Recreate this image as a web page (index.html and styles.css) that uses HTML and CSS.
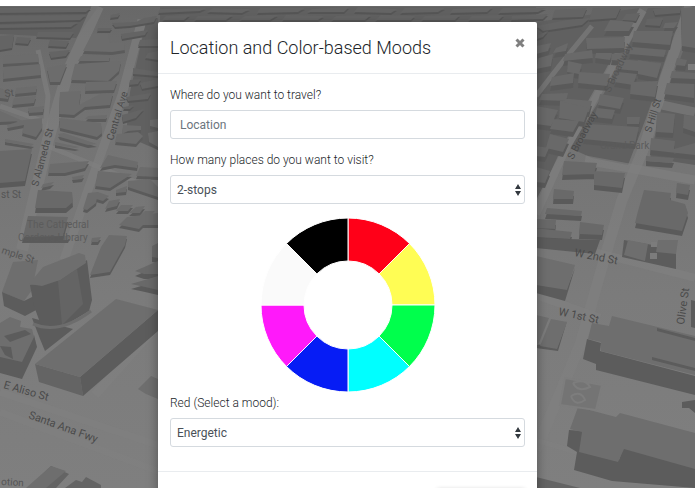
FILE: index.html
```html
<!DOCTYPE html>
<html lang="en">

<head>
    <meta charset="UTF-8">
    <title>Location and Color-based Moods</title>
    <link rel="stylesheet" href="styles.css">
</head>

<body>
    <main class="stage">
        <svg class="map" viewBox="0 6 695 482" preserveAspectRatio="xMidYMin slice" aria-hidden="true">
            <defs>
                <linearGradient id="ground" x1="0" y1="0" x2="0" y2="1">
                    <stop offset="0" stop-color="#686868" />
                    <stop offset="0.25" stop-color="#737373" />
                    <stop offset="0.6" stop-color="#7b7b7b" />
                    <stop offset="1" stop-color="#7f7f7f" />
                </linearGradient>
            </defs>
            <rect y="6" width="695" height="482" fill="url(#ground)" />

            <!-- dense downtown districts -->
            <path class="district" d="M536 22L640 8L598 86L562 150L536 200zM648 8H684L662 72L646 118L628 165L592 158L570 148L606 90zM660 112L672 80L695 20V165L650 158z" />
            <path class="district" d="M160 7H536V22H160zM0 7H98L76 38L0 34zM146 22L158 18V150L126 136L130 92z" />

            <!-- streets -->
            <g class="roads">
                <path d="M98 6L68 72L48 140L22 250" stroke-width="12" />
                <path d="M142 20L122 95L88 190L64 260" stroke-width="9" />
                <path d="M38 50L48 96L45 130M0 106L45 122M45 145L160 192" stroke-width="5" />
                <path d="M0 392L160 446M0 412L160 472" stroke-width="7" />
                <path d="M160 322L95 395" stroke-width="9" />
                <path d="M592 26L560 65L536 96" stroke-width="5" />
                <path d="M643 10L600 88L565 150L536 214" stroke-width="8" />
                <path d="M690 6L665 78L645 145L622 200L604 260L580 345L536 450" stroke-width="11" />
                <path d="M536 237L695 278M536 295L600 318" stroke-width="8" />
                <path d="M585 160L695 180M662 105L695 112" stroke-width="9" />
                <path d="M536 440L695 488" stroke-width="5" />
            </g>

            <!-- low blocks near the horizon -->
            <g class="blocks far">
                <path d="M0 8H91L86 12L0 13zM0 16L86 15L80 20L0 22zM0 25L78 22L71 27L0 28z" />
                <path d="M0 36L14 35L12 48L0 50zM17 37L31 38L28 44L15 43zM38 32L74 32L70 38L36 37zM50 40L69 41L66 47L48 46zM49 52L70 50L66 56L51 58z" />
                <path d="M98 28L112 28L110 31L97 31zM112 23L136 22L144 18L157 16L154 22L130 26L115 27zM111 15L120 13L118 17L110 18zM121 34L148 30L145 35L122 39zM140 40L158 39V46L138 46zM148 53L158 51V60L145 58zM133 68L158 72V76L133 74zM130 80L141 79L138 84L129 85zM140 83L158 79V86L142 89zM126 97L151 93L148 99L128 101zM124 107L134 105L130 109L123 109zM122 115L144 109L136 118L123 122z" />
                <path d="M160 9L206 8L200 11L158 13zM213 8L250 9L242 13L207 12zM260 8L305 8L298 12L257 13zM312 9L349 7L344 12L307 12zM358 7L397 9L391 13L354 12zM405 8L445 8L438 12L400 13zM453 9L493 7L487 12L450 13zM503 8L546 8L538 12L498 13z" />
                <path d="M166 16L190 15L184 20L162 20zM198 16L233 15L226 20L194 20zM245 16L278 15L270 20L239 20zM286 15L324 16L318 20L282 20zM336 16L371 15L365 20L331 20zM381 15L415 16L411 20L375 20zM425 16L460 15L455 20L421 20zM472 16L504 15L499 20L468 20z" />
                <path d="M512 16L548 14L543 19L511 20zM555 10L587 8L583 17L552 18zM593 8L621 7L616 18L589 20zM536 26L567 20L590 18L582 25L543 31zM626 14L640 13L636 21L622 20zM653 9L682 6L680 13L655 15zM647 19L663 18L660 26L645 25zM538 35L548 31L543 37L537 39z" />
            </g>

            <g class="blocks">
                <path d="M3 56L38 54L39 62L3 64zM4 67L40 64L41 75L3 79zM47 68L67 64L60 82L50 82zM16 88L37 86L36 92L15 94zM14 98L36 96L34 103L12 105zM0 88L10 92L8 99L0 98zM28 108L44 106L43 112L29 113zM0 111L23 121L0 122zM24 120L42 118L42 128L36 137L22 133L24 125L8 128L7 125zM5 139L34 144L31 146L5 142z" />
                <path d="M92 34L108 34L110 43L124 42L125 50L112 52L83 51zM81 56L110 55L109 61L78 61zM75 64L121 61L119 71L108 81L71 80zM86 82L117 81L114 90L85 91zM60 92L81 91L79 105L100 94L113 93L110 105L85 107L74 115L59 114z" />
                <path d="M59 118L101 123L102 133L97 137L60 128zM58 134L64 133L97 144L88 145L60 137zM88 116L107 115L106 119L85 119zM55 142L79 147L75 148L55 145zM123 125L141 126L141 130L128 131L122 134zM117 134L138 132L143 136L136 144L115 142zM150 120L158 119V128L150 126zM148 133L158 131V147L149 142z" />
                <path d="M50 164L89 161L85 168L65 173L48 173zM72 177L84 175L82 179L73 180zM43 184L54 182L50 186L41 188zM108 155L138 162L137 168L115 165L100 168zM98 171L132 174L110 188L95 186zM140 167L158 168V177L136 176zM128 181L150 179L158 187V197L128 187zM116 190L127 186L126 192L116 193z" />
                <path d="M88 193L98 192L96 203L87 210L83 209zM98 192L109 196L103 201L96 199zM109 201L120 199L117 206L105 209zM121 205L133 205L128 211L116 211zM136 207L145 206L140 213L129 213zM145 211L155 211L149 217L139 216zM127 217L158 213V225L143 225L139 229L119 225zM92 238L101 237L98 242L91 242z" />
                <path d="M109 235L127 236L125 245L110 272L90 275L101 247zM23 236L70 236L68 240L22 240z" />
            </g>
            <g class="blocks tall">
                <path d="M0 151L32 149L25 181L0 183zM38 190L72 192L73 202L66 208L35 208zM28 216L68 217L63 236L23 237z" />
                <path d="M135 271L158 261V274L144 274zM131 284L158 276V290L145 287zM152 246L158 243V258L152 257z" />
                <path d="M536 46L551 43L548 51L536 54zM539 58L553 54L551 66L536 69zM556 48L568 43L566 51L553 53zM565 54L592 50L593 58L563 61zM568 61L582 64L579 74L567 72zM586 38L625 37L624 48L587 49zM610 20L634 22L629 31L604 31z" />
                <path d="M596 53L612 53L610 60L595 58zM612 54L627 52L623 61L611 60zM619 59L661 63L658 73L617 69zM634 31L673 31L670 45L632 42zM665 23L678 22L674 28L663 28zM681 8L695 7V48L682 46z" />
                <path d="M552 77L574 73L573 83L550 86zM542 94L568 93L566 101L539 100zM560 98L592 101L589 112L560 109zM579 72L610 74L607 86L578 83zM618 72L637 74L633 85L614 82zM638 60L661 64L657 78L638 74zM600 94L624 98L620 109L598 105zM631 47L666 50L664 57L629 54z" />
                <path d="M536 106L558 110L551 126L536 124zM560 101L589 108L584 122L559 118zM554 119L579 121L573 132L550 129zM597 108L615 110L612 119L594 117zM588 124L639 127L635 144L583 139zM627 117L640 117L639 124L627 124zM631 82L658 81L655 97L630 94z" />
                <path d="M550 134L569 139L563 152L546 148zM536 146L549 148L545 157L536 156zM536 167L550 171L545 183L536 182zM564 161L597 163L594 174L562 175zM594 171L625 173L622 188L594 185zM554 189L574 191L573 199L553 199zM547 208L582 211L581 216L545 214z" />
                <path d="M657 112L675 114L673 133L656 132zM667 83L694 84V98L664 94zM672 71L695 73V79L670 78zM651 138L675 141L674 149L695 143V155L650 150zM684 115L695 116V132L683 128zM677 58L687 60L685 66L675 65zM646 156L674 158L672 163L646 161z" />
                <path d="M677 183L690 185L688 195L676 193zM644 190L671 193L670 200L685 204L688 213L682 231L635 223L638 211zM536 219L556 220L555 229L536 228zM580 222L604 225L602 235L579 234zM534 228L572 232L570 239L536 237z" />
            </g>

            <!-- city hall tower and long hall -->
            <path class="roof" d="M13 262L38 260L32 290L24 301L2 292z" />
            <path class="side" d="M2 292L24 301L38 294V309L25 316L4 306z" />
            <path class="side" d="M32 318L73 329L45 351L40 339z" />
            <path class="side" d="M30 285L60 280L87 260L92 300L89 311L62 327L42 328L34 306z" />
            <path class="face" d="M58 281L77 269L83 304L62 325z" />
            <path class="roof" d="M29 284L43 267L79 253L85 255L86 263L60 280L42 286z" />
            <path class="rim" d="M33 324Q59 335 91 311" />
            <path class="side" d="M0 345L22 359L34 335L37 347L22 379L0 373z" />
            <path class="roof" d="M0 323L10 317L21 321L20 327L32 329L34 337L22 362L0 357z" />
            <path class="side" d="M4 336L25 330L31 334L10 342zM0 346L11 347L13 359L5 355z" />
            <path class="face" d="M35 364L80 377L83 396L39 382z" />
            <path class="side" d="M80 377L158 310V331L83 396z" />
            <path class="roof" d="M35 364L116 299L158 310L80 377z" />
            <path class="roof" d="M138 389L151 376L158 379V399L146 394z" />
            <path class="face" d="M28 488L51 466L69 474L56 488zM65 488L76 480L82 482L86 477L101 485V488z" />
            <path class="roof" d="M26 488L51 466L66 471L46 488z" />

            <!-- blocks around W 1st St -->
            <path class="side" d="M536 283L567 288L575 268L565 301L536 293z" />
            <path class="roof" d="M536 256L575 265L567 290L536 285z" />
            <path class="side" d="M536 238L600 240L595 254L536 248z" />
            <path class="side" d="M624 240L676 249V269L622 257z" />
            <path class="roof" d="M628 240L648 244L645 261L624 255zM658 240H678L676 254L656 252z" />
            <path class="hole" d="M651 242H657V247H651zM650 253H657V259H650z" />
            <path class="side" d="M536 344L557 348L567 321L558 351L536 348z" />
            <path class="roof" d="M536 315L549 318L538 345H536zM551 319L567 322L557 349L540 346z" />
            <path class="side" d="M587 339L601 343L600 351L695 376V395L596 370V364L583 359z" />
            <path class="roof" d="M588 339L592 323L609 326L612 316L695 336V375L601 351V342z" />
            <path class="side" d="M657 328L695 338V341L657 331zM652 357L695 368V371L652 360z" />
            <path class="side" d="M569 430L582 431V451L619 460L623 448L695 467V488L612 481L574 470L577 452L567 446z" />
            <path class="roof" d="M570 429L578 407L616 417L620 413L695 433V469L624 449L618 462L579 452L582 432z" />
            <path class="face" d="M536 477L580 488H536z" />
            <path class="side" d="M682 402L695 400V413L689 408L682 408zM691 300L695 301V328L691 327z" />
            <path class="garden" d="M565 378L602 385L596 410L560 405zM573 383Q585 378 590 387Q578 393 573 383M571 396Q581 390 585 400Q575 407 571 396" />
            <path class="hole" d="M688 64H695V70H688z" />

            <g class="streets">
                <text transform="translate(38 187) rotate(-75)">S Alameda St</text>
                <text transform="translate(113 141) rotate(-73)">Central Ave</text>
                <text class="dim" transform="translate(1 198)">st St</text>
                <text class="dim" transform="translate(5 97) rotate(-8)">St</text>
                <text class="faint" transform="translate(27 228)">The Cathedral</text>
                <text class="faint" transform="translate(18 241)">Cordova Library</text>
                <text class="dim" transform="translate(1 253) rotate(18)">mple St</text>
                <text class="near" transform="translate(3 388) rotate(16)">E Aliso St</text>
                <text class="near" transform="translate(28 418) rotate(20)">Santa Ana Fwy</text>
                <text class="dim" transform="translate(1 485) rotate(3)">otion</text>
                <text transform="translate(573 160) rotate(-62)">S Broadway</text>
                <text class="dim" transform="translate(610 93) rotate(-65)">S Broadway</text>
                <text transform="translate(651 133) rotate(-73)">S Hill St</text>
                <text class="faint" transform="translate(600 149)">Grand Park</text>
                <text class="near" transform="translate(574 256) rotate(11)">W 2nd St</text>
                <text class="near" transform="translate(558 315) rotate(12)">W 1st St</text>
                <text class="near" transform="translate(684 325) rotate(-82)">Olive St</text>
            </g>
        </svg>

        <form class="modal" role="dialog" aria-labelledby="modal-title">
            <header class="modal-header">
                <h1 id="modal-title">Location and Color-based Moods</h1>
                <button class="close" type="button" aria-label="Close">
                    <svg viewBox="0 0 10 10" aria-hidden="true">
                        <path d="M1.5 1.5L8.5 8.5M8.5 1.5L1.5 8.5" />
                    </svg>
                </button>
            </header>
            <div class="modal-body">
                <div class="field">
                    <label for="location">Where do you want to travel?</label>
                    <input id="location" type="text" placeholder="Location">
                </div>
                <div class="field">
                    <label for="stops">How many places do you want to visit?</label>
                    <select id="stops">
                        <option>2-stops</option>
                    </select>
                </div>
                <svg class="wheel" viewBox="-87 -87 174 174" role="img" aria-label="Color wheel">
                    <path fill="#ff0018" d="M0 -87A87 87 0 0 1 61.5 -61.5L31.1 -31.1A44 44 0 0 0 0 -44z" />
                    <path fill="#fffd54" d="M61.5 -61.5A87 87 0 0 1 87 0H44A44 44 0 0 0 31.1 -31.1z" />
                    <path fill="#00ff4c" d="M87 0A87 87 0 0 1 61.5 61.5L31.1 31.1A44 44 0 0 0 44 0z" />
                    <path fill="#00ffff" d="M61.5 61.5A87 87 0 0 1 0 87V44A44 44 0 0 0 31.1 31.1z" />
                    <path fill="#061cf5" d="M0 87A87 87 0 0 1 -61.5 61.5L-31.1 31.1A44 44 0 0 0 0 44z" />
                    <path fill="#ff19fa" d="M-61.5 61.5A87 87 0 0 1 -87 0H-44A44 44 0 0 0 -31.1 31.1z" />
                    <path fill="#fafafa" d="M-87 0A87 87 0 0 1 -61.5 -61.5L-31.1 -31.1A44 44 0 0 0 -44 0z" />
                    <path fill="#000000" d="M-61.5 -61.5A87 87 0 0 1 0 -87V-44A44 44 0 0 0 -31.1 -31.1z" />
                </svg>
                <div class="field">
                    <label for="mood">Red (Select a mood):</label>
                    <select id="mood">
                        <option>Energetic</option>
                    </select>
                </div>
            </div>
            <footer class="modal-footer">
                <button class="submit" type="submit" aria-label="Submit"></button>
            </footer>
        </form>
    </main>
</body>

</html>
```
FILE: styles.css
```css
* {
    box-sizing: border-box;
}

body {
    margin: 0;
    padding: 6px 0;
    background-color: #fff;
    color: #212529;
    font-family: Roboto, "Liberation Sans", sans-serif;
    font-size: 12px;
    font-weight: 300;
    line-height: 18px;
}

.stage {
    position: relative;
    height: calc(100vh - 12px);
    padding: 16px;
    overflow: hidden;
}

/* map behind the dialog */
.map {
    position: absolute;
    top: 0;
    left: 0;
    width: 100%;
    height: 100%;
}

.district {
    fill: #606060;
}

.roads {
    fill: none;
    stroke: #808080;
    stroke-opacity: .6;
}

.blocks {
    fill: #6c6c6c;
    filter: drop-shadow(0 3px 0 #5b5b5b);
}

.blocks.far {
    fill: #646464;
    filter: drop-shadow(0 2px 0 #555);
}

.blocks.tall {
    fill: #696969;
    filter: drop-shadow(0 5px 0 #5a5a5a);
}

.roof {
    fill: #6e6e6e;
}

.face {
    fill: #646464;
}

.side {
    fill: #5c5c5c;
}

.hole {
    fill: #7c7c7c;
}

.rim {
    fill: none;
    stroke: #6d6d6d;
    stroke-width: 3;
}

.garden {
    fill: #747474;
    stroke: #7d7d7d;
    stroke-width: 2;
}

.streets {
    fill: #4a4a4a;
    font-size: 10px;
    font-weight: 400;
}

.streets .near {
    font-size: 11px;
}

.streets .dim {
    fill: #555;
}

.streets .faint {
    fill: #5c5c5c;
}

/* dialog */
.modal {
    position: relative;
    max-width: 379px;
    margin: 0 auto;
    background-color: #fff;
    border-radius: 2px;
    box-shadow: 0 4px 12px rgba(0, 0, 0, .35);
}

.modal-header {
    display: flex;
    justify-content: space-between;
    align-items: flex-start;
    padding: 12px;
    border-bottom: 1px solid #e9ecef;
}

.modal-header h1 {
    margin: 0;
    font-size: 18px;
    font-weight: 300;
    line-height: 27px;
}

.close {
    padding: 4px 0;
    border: 0;
    background: none;
}

.close svg {
    display: block;
    width: 10px;
    height: 10px;
    fill: none;
    stroke: #7f7f7f;
    stroke-width: 3;
}

.modal-body {
    padding: 12px;
}

.field {
    margin-bottom: 12px;
}

.field label {
    display: block;
    margin-bottom: 6px;
}

.field input,
.field select {
    display: block;
    width: 100%;
    height: 29px;
    border: 1px solid #d5dadf;
    border-radius: 3px;
    background-color: #fff;
    color: #495057;
    font: inherit;
    font-weight: 400;
}

.field input {
    padding: 0 9px;
}

.field input::placeholder {
    color: #6c757d;
    opacity: 1;
}

.field select {
    padding: 0 6px;
    appearance: none;
    background: #fff url("data:image/svg+xml,%3Csvg xmlns='http://www.w3.org/2000/svg' viewBox='0 0 6 12'%3E%3Cpath fill='%23343a40' d='M3 0L6 5H0zM3 12L0 7h6z'/%3E%3C/svg%3E") no-repeat right 3px center / 6px 12px;
}

.wheel {
    display: block;
    width: 174px;
    margin: 14px auto 2px;
}

.wheel path {
    stroke: #fff;
    stroke-width: 1;
}

.modal-footer {
    display: flex;
    justify-content: flex-end;
    padding: 16px 12px;
    border-top: 1px solid #e9ecef;
}

.submit {
    width: 88px;
    height: 32px;
    border: 0;
    border-radius: 2px;
    background-color: #fff;
    box-shadow: 0 2px 5px rgba(0, 0, 0, .3);
}
```
